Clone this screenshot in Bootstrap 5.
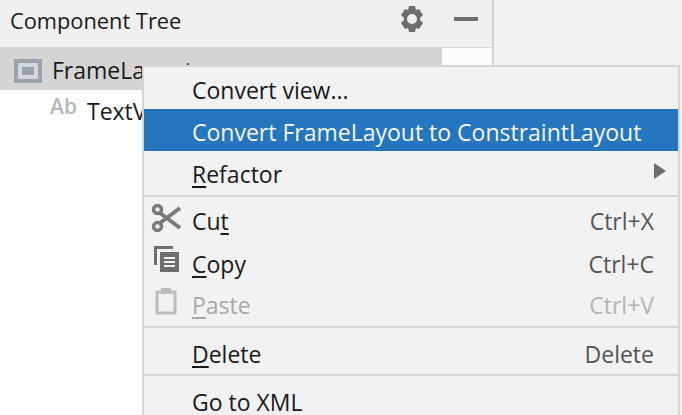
<!DOCTYPE html>
<html>
<head>
  <title>Component Tree</title>
  <link href="https://cdn.jsdelivr.net/npm/bootstrap@5.3.0/dist/css/bootstrap.min.css" rel="stylesheet">
  <style>
    html, body { height: 100%; }
    body {
      font-family: "Open Sans", sans-serif;
      background: #f2f2f2;
      color: #1a1a1a;
      overflow: hidden;
      position: relative;
    }
    .tree-panel { width: 494px; height: 415px; border-right: 2px solid #d0d0d0; background: #fff; }
    .tree-head { height: 48px; background: #f0f0f0; border-bottom: 1px solid #d6d6d6; padding: 0 14px 5px 10px; font-size: 21.8px; }
    .tree-row { height: 42px; font-size: 23px; }
    .tree-row.picked { background: #d4d4d4; padding: 3px 0 0 14px; gap: 10px; border-right: 50px solid #fbfbfb; }
    .tree-row.child { padding-left: 50px; gap: 10px; }
    .ab-icon { font-size: 21px; font-weight: 600; color: #b4b8bc; margin-top: -8px; }
    .head-icons { gap: 28px; padding-bottom: 4px; }
    .head-icons svg:first-child { margin-right: 1px; }
    .ctx-menu {
      position: absolute; left: 142px; top: 65px; width: 538px; height: 360px;
      background: #f2f2f2; border: 2px solid #d6d6d6; border-bottom: 0;
      font-size: 23px;
    }
    .ctx-item { height: 42px; padding: 4px 24px 0 0; color: #1a1a1a; }
    .ctx-item.on { background: #2675bf; color: #f4f8fc; }
    .ctx-item.off { color: #a8a8a8; }
    .ctx-item.low { padding-top: 6px; }
    .ctx-item.tall { height: 44px; padding-top: 2px; }
    .ctx-item.mid { height: 43px; }
    .ctx-item.wide { height: 46px; }
    .ctx-item u { text-underline-offset: 3px; }
    .ctx-gut { width: 48px; flex: none; padding-left: 7px; display: flex; align-items: center; }
    .ctx-gut svg { width: 30px; height: 30px; margin-bottom: 8px; }
    .ctx-gut.higher svg { margin-bottom: 10px; }
    .ctx-key { color: #555; margin-left: auto; }
    .ctx-item.off .ctx-key { color: #b4b4b4; }
    .ctx-sep { height: 2px; background: #d6d6d6; }
    .ctx-arrow { width: 0; height: 0; border-left: 12px solid #6e6e6e; border-top: 8px solid transparent; border-bottom: 8px solid transparent; margin: 0 -12px 6px auto; }
  </style>
</head>
<body>
  <div class="tree-panel">
    <div class="tree-head d-flex align-items-center justify-content-between">
      <span>Component Tree</span>
      <div class="head-icons d-flex align-items-center">
        <svg width="26" height="28" viewBox="0 0 26 28"><path fill="#6e6e6e" fill-rule="evenodd" d="M10 1h6l1 4 3-1 4 6-3 3v2l3 3-4 6-3-1-1 4h-6l-1-4-3 1-4-6 3-3v-2l-3-3 4-6 3 1zM13 9a5 5 0 1 0 0 10 5 5 0 0 0 0-10z"/></svg>
        <svg width="24" height="6" viewBox="0 0 24 6"><rect width="24" height="4" y="1" fill="#6e6e6e"/></svg>
      </div>
    </div>
    <div class="tree-row picked d-flex align-items-center">
      <svg width="28" height="24" viewBox="0 0 28 24"><rect x="2" y="2" width="24" height="20" fill="#d4d8da" stroke="#99a3ad" stroke-width="4"/><rect x="8" y="8" width="12" height="8" fill="#99a3ad"/></svg>
      <span>FrameLayout</span>
    </div>
    <div class="tree-row child d-flex align-items-center">
      <span class="ab-icon">Ab</span>
      <span>TextView</span>
    </div>
  </div>

  <div class="ctx-menu">
    <div class="ctx-item d-flex align-items-center"><span class="ctx-gut"></span>Convert view...</div>
    <div class="ctx-item on d-flex align-items-center"><span class="ctx-gut"></span>Convert FrameLayout to ConstraintLayout</div>
    <div class="ctx-item tall d-flex align-items-center"><span class="ctx-gut"></span><span><u>R</u>efactor</span><span class="ctx-arrow"></span></div>
    <div class="ctx-sep"></div>
    <div class="ctx-item mid low d-flex align-items-center">
      <span class="ctx-gut"><svg viewBox="0 0 30 30"><g fill="none" stroke="#7a7a7a"><circle cx="6.5" cy="6.5" r="4" stroke-width="3.5"/><circle cx="6.5" cy="23.5" r="4" stroke-width="3.5"/><path stroke-width="4" d="M9 10 29 25M9 20 29 5"/></g></svg></span>
      <span>Cu<u>t</u></span><span class="ctx-key">Ctrl+X</span>
    </div>
    <div class="ctx-item low d-flex align-items-center">
      <span class="ctx-gut higher"><svg viewBox="0 0 30 30"><path fill="#6e6e6e" d="M3 2h19v3H6v16H3z"/><path fill="#6e6e6e" fill-rule="evenodd" d="M9 8h19v20H9zM13 13v2h11v-2zM13 17v2h11v-2zM13 21v2h11v-2z"/></svg></span>
      <span><u>C</u>opy</span><span class="ctx-key">Ctrl+C</span>
    </div>
    <div class="ctx-item tall off d-flex align-items-center">
      <span class="ctx-gut"><svg viewBox="0 0 30 30"><path fill="none" stroke="#bcbcbc" stroke-width="3" d="M6 6h18v21H6z"/><path fill="#bcbcbc" d="M10 2h10v6H10z"/></svg></span>
      <span><u>P</u>aste</span><span class="ctx-key">Ctrl+V</span>
    </div>
    <div class="ctx-sep"></div>
    <div class="ctx-item wide low d-flex align-items-center"><span class="ctx-gut"></span><span><u>D</u>elete</span><span class="ctx-key">Delete</span></div>
    <div class="ctx-sep"></div>
    <div class="ctx-item wide low d-flex align-items-center"><span class="ctx-gut"></span>Go to XML</div>
  </div>
  <script src="https://cdn.jsdelivr.net/npm/bootstrap@5.3.0/dist/js/bootstrap.bundle.min.js"></script>
</body>
</html>
